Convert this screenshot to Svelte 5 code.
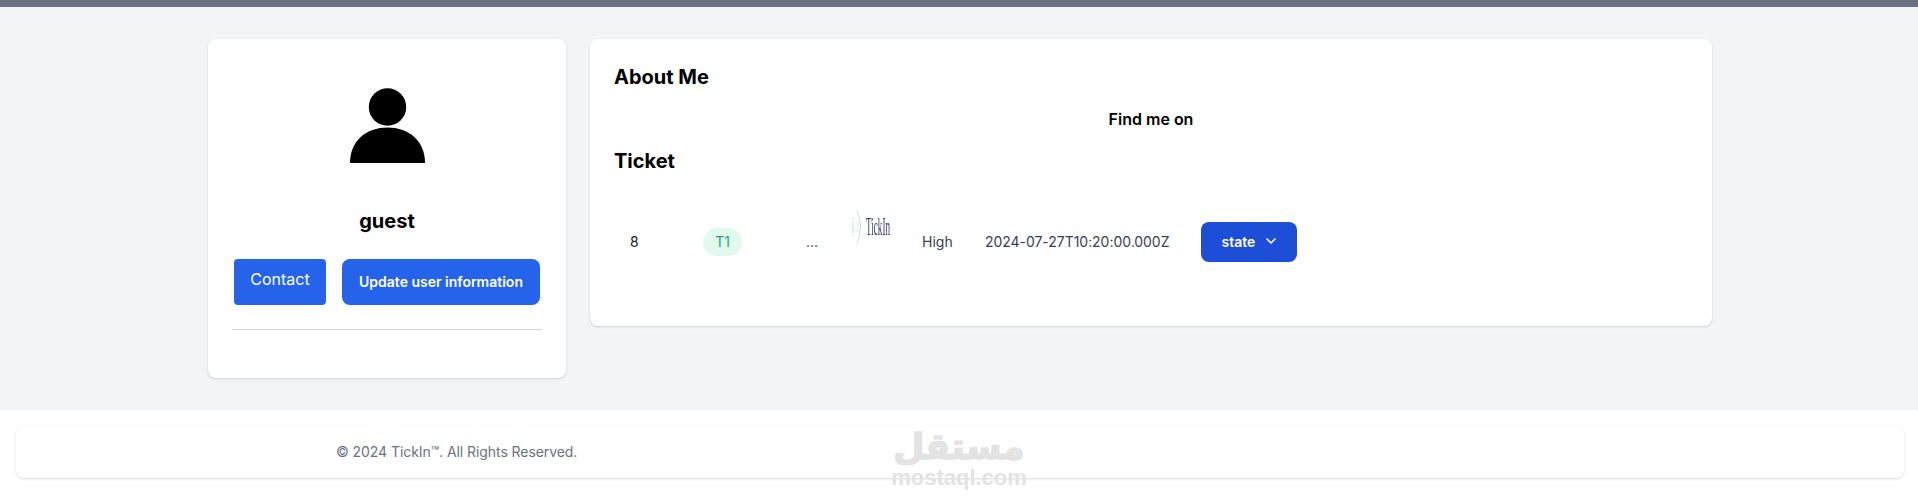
<script>
	const ticket = {
		id: 8,
		code: 'T1',
		title: '...',
		priority: 'High',
		date: '2024-07-27T10:20:00.000Z'
	};
</script>

<div class="page">
	<div class="topbar"></div>

	<main class="main">
		<section class="card profile">
			<svg class="avatar" viewBox="0 0 75 75" aria-hidden="true">
				<circle cx="37.5" cy="19" r="18.7" />
				<path d="M0 75C0 53 16 39.500 37.500 39.500S75 53 75 75Z" />
			</svg>
			<h2 class="name">guest</h2>
			<div class="actions">
				<button type="button" class="btn contact">Contact</button>
				<button type="button" class="btn update">Update user information</button>
			</div>
			<hr class="rule" />
		</section>

		<section class="card details">
			<h2 class="heading">About Me</h2>
			<p class="find">Find me on</p>
			<h2 class="heading ticket-title">Ticket</h2>
			<div class="row">
				<span class="cell id">{ticket.id}</span>
				<span class="pill">{ticket.code}</span>
				<span class="cell dots">{ticket.title}</span>
				<svg class="logo" viewBox="0 0 42 34" role="img" aria-label="TickIn logo">
					<g fill="none" stroke="#d5ece6" stroke-width="0.9">
						<ellipse cx="6.500" cy="17" rx="2.500" ry="5" />
						<path d="M5 7Q1 17 5 27" />
						<path d="M8 0Q15 17 8 34" stroke="#c3dcd6" />
					</g>
					<text x="17" y="25" textLength="24" lengthAdjust="spacingAndGlyphs">TickIn</text>
				</svg>
				<span class="cell priority">{ticket.priority}</span>
				<span class="cell date">{ticket.date}</span>
				<button type="button" class="state">
					state
					<svg viewBox="0 0 10 6" aria-hidden="true"><path d="M1 1l4 4 4-4" /></svg>
				</button>
			</div>
		</section>
	</main>

	<footer class="footer">
		<div class="footer-card">
			<span>© 2024 TickIn™. All Rights Reserved.</span>
		</div>
		<div class="watermark" aria-hidden="true">
			<span class="wm-ar">مستقل</span>
			<span class="wm-en">mostaql.com</span>
		</div>
	</footer>
</div>

<style>
	:global(body) {
		background: #fff;
		font-family: Inter, 'Liberation Sans', sans-serif;
	}

	.page {
		height: 499px;
		overflow: hidden;
		display: flex;
		flex-direction: column;
	}

	.topbar {
		height: 7px;
		background: #6b7280;
	}

	.main {
		height: 403px;
		box-sizing: border-box;
		padding: 32px 205px 0 208px;
		background: #f3f4f6;
		display: flex;
		align-items: flex-start;
		gap: 24px;
	}

	.card {
		box-sizing: border-box;
		background: #fff;
		border-radius: 8px;
		box-shadow: 0 1px 3px rgba(0, 0, 0, 0.1), 0 1px 2px rgba(0, 0, 0, 0.06);
	}

	.profile {
		width: 358px;
		height: 339px;
		padding: 49px 24px 0;
		display: flex;
		flex-direction: column;
		align-items: center;
	}

	.avatar {
		width: 75px;
		height: 75px;
		fill: #000;
	}

	.name {
		margin: 44px 0 0;
		font-size: 20px;
		line-height: 28px;
		font-weight: 700;
		color: #000;
	}

	.actions {
		margin-top: 24px;
		display: flex;
		gap: 16px;
	}

	.btn {
		height: 46px;
		border: 0;
		background: #2563eb;
		color: #fff;
		font-family: inherit;
	}

	.contact {
		width: 92px;
		padding: 0 0 6px;
		border-radius: 4px;
		font-size: 16px;
	}

	.update {
		width: 198px;
		padding: 0 0 2px;
		border-radius: 8px;
		font-size: 14px;
		font-weight: 600;
	}

	.rule {
		width: 100%;
		margin: 24px 0 0;
		border: 0;
		border-top: 1px solid #d1d5db;
	}

	.details {
		width: 1122px;
		height: 287px;
		padding: 24px;
	}

	.heading {
		margin: 0;
		font-size: 20px;
		line-height: 28px;
		font-weight: 700;
		color: #000;
	}

	.find {
		margin: 16px 0 0;
		text-align: center;
		font-size: 16px;
		line-height: 24px;
		font-weight: 600;
		color: #000;
	}

	.ticket-title {
		margin-top: 16px;
	}

	.row {
		margin-top: 47px;
		display: flex;
		align-items: center;
		font-size: 14px;
		line-height: 20px;
		color: #374151;
		height: 40px;
	}

	.cell {
		flex: none;
	}

	.id {
		width: 89px;
		padding-left: 16px;
		box-sizing: border-box;
		color: #111827;
	}

	.pill {
		flex: none;
		width: 39px;
		height: 28px;
		border-radius: 14px;
		background: #e2f9ee;
		color: #21a67a;
		text-align: center;
		line-height: 28px;
	}

	.dots {
		width: 107px;
		box-sizing: border-box;
		padding-left: 64px;
		white-space: nowrap;
	}

	.logo {
		flex: none;
		width: 42px;
		height: 34px;
		margin-top: -30px;
		filter: blur(0.4px);
	}

	.logo text {
		font-family: 'Liberation Serif', serif;
		font-size: 26px;
		fill: #2f3d70;
	}

	.priority {
		margin-left: 31px;
		width: 63px;
	}

	.date {
		width: 216px;
		letter-spacing: -0.04px;
	}

	.state {
		flex: none;
		width: 96px;
		height: 40px;
		padding: 0 0 2px;
		border: 0;
		border-radius: 8px;
		background: #1d4ed8;
		color: #fff;
		font-family: inherit;
		font-size: 14px;
		font-weight: 600;
		display: flex;
		align-items: center;
		justify-content: center;
		gap: 11px;
	}

	.state svg {
		width: 10px;
		height: 6px;
		fill: none;
		stroke: #fff;
		stroke-width: 1.6;
		stroke-linecap: round;
		stroke-linejoin: round;
	}

	.footer {
		flex: 1;
		position: relative;
		background: #fff;
		padding: 16px 14px 0 16px;
	}

	.footer-card {
		height: 52px;
		box-sizing: border-box;
		padding: 0 0 2px 320px;
		display: flex;
		align-items: center;
		border-radius: 8px;
		background: #fff;
		box-shadow: 0 1px 3px rgba(0, 0, 0, 0.1), 0 1px 2px rgba(0, 0, 0, 0.06);
		font-size: 14px;
		letter-spacing: -0.07px;
		color: #6b7280;
	}

	.watermark {
		position: absolute;
		left: 895px;
		top: 16px;
		width: 128px;
		display: flex;
		flex-direction: column;
		align-items: center;
		color: #e3e3e3;
		font-weight: 700;
		pointer-events: none;
	}

	.wm-ar {
		font-family: 'DejaVu Sans', sans-serif;
		font-size: 36px;
		line-height: 41px;
		-webkit-text-stroke: 1.5px #e3e3e3;
	}

	.wm-en {
		font-family: 'Liberation Sans', sans-serif;
		font-size: 22px;
		line-height: 22px;
	}
</style>
